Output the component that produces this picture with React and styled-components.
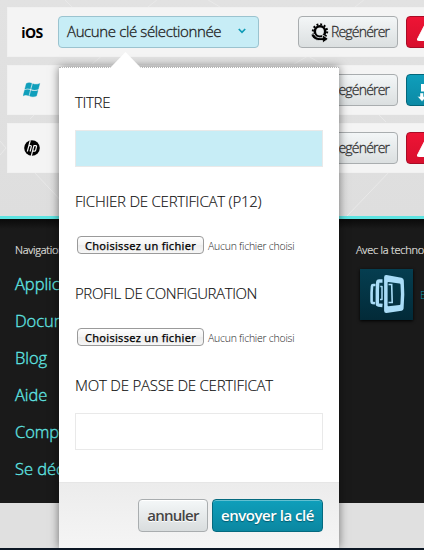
import React from 'react';
import styled, { createGlobalStyle } from 'styled-components';

const GlobalStyle = createGlobalStyle`
  * { box-sizing: border-box; }
  html, body { margin: 0; padding: 0; overflow: hidden; }
  body { font-family: "Open Sans", "Noto Sans", sans-serif; font-weight: 300; color: #111; }
  button { font-family: inherit; margin: 0; cursor: pointer; }
`;

const Page = styled.div`
  position: relative;
  display: flex;
  flex-direction: column;
  width: 424px;
  height: 550px;
  overflow: hidden;
  background: #e0e0e0;
`;

const KeysSection = styled.section`
  position: relative;
  flex: none;
  height: 216px;
  padding: 7px 0 0 7px;
  display: flex;
  flex-direction: column;
  gap: 8px;
  overflow: hidden;
  background: linear-gradient(#e2e2e2, #dedede);
`;

const Texture = styled.svg`
  position: absolute;
  inset: 0;
`;

const KeyRow = styled.div`
  position: relative;
  flex: none;
  display: flex;
  align-items: center;
  width: 450px;
  height: 50px;
  background: #f4f4f4;
  border: 1px solid #f1f1f1;
`;

const Platform = styled.div`
  flex: none;
  width: 48px;
  height: 48px;
  margin-right: 2px;
  display: flex;
  align-items: center;
  justify-content: center;
  font-size: 14px;
  font-weight: 700;
  letter-spacing: -0.5px;
  color: #000;
`;

const KeySelect = styled.button`
  display: flex;
  align-items: center;
  justify-content: space-between;
  width: 201px;
  height: 32px;
  padding: 0 12px 2px 8px;
  border: 1px solid #9bc3cf;
  border-radius: 4px;
  background: #c7edf6;
  color: #222;
  font-size: 15px;
  font-weight: 300;
  letter-spacing: -0.38px;
  white-space: nowrap;
  -webkit-text-stroke: 0.3px #222;
`;

const RowActions = styled.div`
  display: flex;
  gap: 8px;
  margin-left: auto;
  width: 158px;
`;

const RegenerateButton = styled.button`
  flex: none;
  display: flex;
  align-items: center;
  gap: 2px;
  width: 100px;
  height: 32px;
  padding: 0 0 1px 12px;
  border: 1px solid #a9adaf;
  border-radius: 4px;
  background: linear-gradient(#f3f6f7, #dbdfe0);
  color: #333;
  font-size: 14px;
  font-weight: 300;
  letter-spacing: -0.82px;
  -webkit-text-stroke: 0.3px #333;
  svg { margin-top: 2px; }
`;

const StatusButton = styled.button`
  flex: none;
  width: 40px;
  height: 32px;
  padding: 0;
  border: 1px solid ${(p) => (p.$danger ? '#a80c26' : '#04667a')};
  border-radius: 4px;
  background: ${(p) => (p.$danger
    ? 'linear-gradient(#ee1435, #d80f2d)'
    : 'linear-gradient(#0f9ebb, #0b8aa5)')};
  svg { display: block; }
`;

const SiteFooter = styled.footer`
  flex: none;
  display: flex;
  height: 287px;
  border-top: 3px solid #5ee4e2;
  background: linear-gradient(#0a0a0a, #1a1a1a 10px);
`;

const FooterColumn = styled.div`
  flex: none;
  width: 341px;
  padding: 23px 0 0 15px;
`;

const FooterTitle = styled.div`
  font-size: 11px;
  line-height: 16px;
  letter-spacing: -0.25px;
  color: #e4e4e0;
  white-space: nowrap;
  -webkit-text-stroke: 0.2px #e4e4e0;
`;

const NavList = styled.nav`
  display: flex;
  flex-direction: column;
  padding-top: 7px;
`;

const NavLink = styled.a`
  height: 37px;
  font-size: 16.5px;
  line-height: 37px;
  letter-spacing: -0.05px;
  color: #5fe3e1;
  -webkit-text-stroke: 0.35px #5fe3e1;
`;

const TechRow = styled.div`
  display: flex;
  align-items: center;
  gap: 7px;
  margin: 11px 0 0 4px;
`;

const TechLogo = styled.div`
  flex: none;
  width: 53px;
  height: 51px;
  background: linear-gradient(#053e50, #022a38);
  box-shadow: 0 1px 3px #000;
  svg { display: block; }
`;

const TechLink = styled.a`
  font-size: 11px;
  color: #1295ae;
`;

const BottomStrip = styled.div`
  flex: none;
  height: 2px;
  margin-top: auto;
  background: #0c1724;
`;

const Popover = styled.div`
  position: absolute;
  left: 59px;
  top: 67px;
  width: 280px;
  height: 481px;
  display: flex;
  flex-direction: column;
  background: #fff;
  box-shadow: 0 0 9px rgba(0, 0, 0, 0.5);
  clip-path: inset(-20px -20px 0 -20px);
`;

const PopoverArrow = styled.svg`
  position: absolute;
  left: 51px;
  top: -16px;
`;

const PopoverBody = styled.div`
  flex: 1;
  display: flex;
  flex-direction: column;
  padding: 24px 16px 0;
  border-top: 1px dotted #b5b5b5;
`;

const Field = styled.div`
  flex: none;
  height: ${(p) => p.$height}px;
`;

const Label = styled.label`
  display: block;
  height: 20px;
  font-size: 15px;
  line-height: 20px;
  letter-spacing: ${(p) => p.$tracking}px;
  color: #111;
  white-space: nowrap;
  -webkit-text-stroke: 0.15px #111;
`;

const TextInput = styled.input`
  display: block;
  width: 248px;
  height: 37px;
  margin-top: 18px;
  border: 1px solid #e9e9e9;
  outline: none;
  background: ${(p) => (p.$active ? '#c7edf6' : '#fff')};
`;

const FilePicker = styled.div`
  display: flex;
  align-items: center;
  gap: 4px;
  margin: 25px 0 0 2px;
  height: 18px;
`;

const FileButton = styled.button`
  width: 127px;
  height: 18px;
  padding: 0;
  border: 1px solid #9a9a9a;
  border-radius: 4px;
  background: linear-gradient(#fff, #f3f3f3 50%, #ececec 51%, #f6f6f6);
  color: #000;
  font-family: "Noto Sans", sans-serif;
  font-size: 11px;
  font-weight: 400;
  line-height: 15px;
  letter-spacing: 0.3px;
  white-space: nowrap;
  -webkit-text-stroke: 0.25px #000;
`;

const FileStatus = styled.span`
  font-size: 10.5px;
  line-height: 16px;
  letter-spacing: -0.25px;
  padding-top: 1px;
  color: #222;
  white-space: nowrap;
`;

const PopoverFooter = styled.div`
  flex: none;
  display: flex;
  justify-content: flex-end;
  gap: 4px;
  height: 66px;
  padding: 16px 16px 0 0;
  border-top: 1px solid #e6e6e6;
  background: linear-gradient(#ececec, #f5f5f5);
`;

const ActionButton = styled.button`
  width: ${(p) => (p.$primary ? 111 : 70)}px;
  height: 33px;
  padding: 0 0 1px;
  border: 1px solid ${(p) => (p.$primary ? '#056a7f' : '#a9adaf')};
  border-radius: 4px;
  background: ${(p) => (p.$primary
    ? 'linear-gradient(#0f9fbb, #0b87a1)'
    : 'linear-gradient(#f4f7f8, #d9ddde)')};
  box-shadow: inset 0 1px 0 ${(p) => (p.$primary ? '#62c0d1' : '#fff')};
  color: ${(p) => (p.$primary ? '#fff' : '#444')};
  font-size: 15px;
  font-weight: 600;
  letter-spacing: ${(p) => (p.$primary ? -0.46 : -0.75)}px;
  text-shadow: ${(p) => (p.$primary ? '0 1px 1px #045b6d' : '0 1px 0 #fff')};
  white-space: nowrap;
`;

const Chevron = () => (
  <svg width="8" height="6" viewBox="0 0 8 6">
    <path d="M.8 1 4 4.3 7.2 1" fill="none" stroke="#0e9bb6" strokeWidth="1.7" />
  </svg>
);

const GearIcon = () => (
  <svg width="18" height="20" viewBox="0 0 18 20">
    <circle cx="9" cy="8.5" r="7.2" fill="none" stroke="#000" strokeWidth="2" strokeDasharray="1.9 1.87" />
    <circle cx="9" cy="8.5" r="5.2" fill="none" stroke="#000" strokeWidth="2.6" />
    <path d="M0 11h3.200c.8 2.400 3 3.700 5.600 3.700h2.800v-2.900l5.800 4.100-5.800 4.100v-2.400H9c-5 0-8.300-2.600-9-6.600z" fill="#000" stroke="#eef1f2" strokeWidth=".8" />
  </svg>
);

const WarningIcon = () => (
  <svg width="38" height="30" viewBox="0 0 38 30">
    <path d="M19 5.500 28 22q.5 1.500-1 1.500H11.500q-1.500 0-1-1.500z" fill="#fff" stroke="#fff" strokeLinejoin="round" />
    <path d="M18 11h2.200l-.4 6h-1.400zM18 18.500h2.200v2H18z" fill="#e01230" />
  </svg>
);

const DownloadIcon = () => (
  <svg width="38" height="30" viewBox="0 0 38 30">
    <path d="M14 9h13v13H19v-3h3l-4-2.500h-4z" fill="#fff" />
    <path d="M13 18h3.500v3.500h3L15 26.500 10.500 21.500H13z" fill="#fff" stroke="#0c8faa" strokeWidth=".4" />
  </svg>
);

const WindowsIcon = () => (
  <svg width="18" height="16" viewBox="0 0 18 16">
    <g fill="#109fbb" stroke="#109fbb" strokeWidth=".35">
      <path d="M3.300 1.600C5.200.4 6.900.5 8.800 1.300L7.300 7C5.500 6.200 3.800 6.200 1.800 7.200z" />
      <path d="M9.800 1.700c2 .9 4.300.9 7-.2l-1.500 5.700c-2.500 1-4.700 1-7 .1z" />
      <path d="M1.600 8.200c2-1 3.700-1 5.500-.2l-1.500 5.700c-1.900-.8-3.600-.8-5.500.1z" />
      <path d="M8 8.400c2.300.9 4.500.9 7 0L13.500 14c-2.500 1-4.700 1-7 0z" />
    </g>
  </svg>
);

const HpIcon = () => (
  <svg width="16" height="16" viewBox="0 0 16 16">
    <circle cx="8" cy="8" r="7.800" fill="#000" />
    <g fill="none" stroke="#f4f4f4" strokeWidth="1.200">
      <path d="M6.300.3 3.300 11.500M4.800 5.700h1.700q1 0 .8 1l-1.200 4.800" />
      <path d="M10 5.300 7.300 15.800M9.800 5.700h2q1 0 .7 1l-.9 3.600q-.2.800-1.200.8H8.700" />
    </g>
  </svg>
);

const PhonesIcon = () => (
  <svg width="53" height="51" viewBox="0 0 53 51">
    <g fill="none" stroke="#a9dcf7" strokeLinejoin="round">
      <path d="M15.500 16h-2.500q-.9 0-1 1.200l-.4 6.300v9q0 1.300.9 1.400l2.500.3" strokeWidth="2.600" />
      <path d="M22.500 12h-3.300q-1.400 0-1.500 1.500l-.4 7.500v13.500q0 1.300 1.200 1.500l4 .5" strokeWidth="3.400" />
      <path d="M20.300 17.500h1.700v13h-2" strokeWidth="1.500" />
    </g>
    <path
      d="M26.500 6 41.500 8.800q2.200.5 2.300 2.700l.5 14-.7 14q-.2 2-2 2.300L26.500 44q-2.300.2-2.400-2.200V8.200Q24.200 5.700 26.500 6zM27.600 13.500v23q0 .9.900.8l11-1.300q.9-.1.900-1l.5-10-.4-9.300q-.1-1-1-1.100l-11-1.600q-.9-.1-.9.500z"
      fill="#a9dcf7"
      fillRule="evenodd"
    />
    <path d="M28.500 15.500h3.200l.5 18h-3.700" fill="none" stroke="#a9dcf7" strokeWidth="1.600" />
  </svg>
);

const KeyActions = ({ danger }) => (
  <RowActions>
    <RegenerateButton><GearIcon />Regénérer</RegenerateButton>
    <StatusButton $danger={danger}>{danger ? <WarningIcon /> : <DownloadIcon />}</StatusButton>
  </RowActions>
);

const FileField = ({ label, tracking }) => (
  <Field $height={92}>
    <Label $tracking={tracking}>{label}</Label>
    <FilePicker>
      <FileButton>Choisissez un fichier</FileButton>
      <FileStatus>Aucun fichier choisi</FileStatus>
    </FilePicker>
  </Field>
);

const links = ['Application', 'Documentation', 'Blog', 'Aide', 'Compte', 'Se déconnecter'];

export default function App() {
  return (
    <>
      <GlobalStyle />
      <Page>
        <KeysSection>
          <Texture width="424" height="216">
            <path
              d="M60-5 75 10M148 7l15-12M92 64l12-10M0 155l6-7-6-7M30 119l12-12M34 172 66 206M200-5l20 12M355 7l15-12M294 64l14-8 14 8M347 216l44-46M372 108l14 14"
              fill="none"
              stroke="#e9e9e9"
            />
          </Texture>
          <KeyRow>
            <Platform>iOS</Platform>
            <KeySelect>Aucune clé sélectionnée<Chevron /></KeySelect>
            <KeyActions danger />
          </KeyRow>
          <KeyRow>
            <Platform><WindowsIcon /></Platform>
            <KeyActions />
          </KeyRow>
          <KeyRow>
            <Platform><HpIcon /></Platform>
            <KeyActions danger />
          </KeyRow>
        </KeysSection>

        <SiteFooter>
          <FooterColumn>
            <FooterTitle>Navigation</FooterTitle>
            <NavList>
              {links.map((l) => <NavLink key={l}>{l}</NavLink>)}
            </NavList>
          </FooterColumn>
          <FooterColumn>
            <FooterTitle>Avec la techno</FooterTitle>
            <TechRow>
              <TechLogo><PhonesIcon /></TechLogo>
              <TechLink>E</TechLink>
            </TechRow>
          </FooterColumn>
        </SiteFooter>
        <BottomStrip />

        <Popover>
          <PopoverArrow width="31" height="17" viewBox="0 0 31 17">
            <path d="M0 17 15.500 1 31 17z" fill="#fff" />
          </PopoverArrow>
          <PopoverBody>
            <Field $height={99}>
              <Label $tracking={-0.3}>TITRE</Label>
              <TextInput $active />
            </Field>
            <FileField label="FICHIER DE CERTIFICAT (P12)" tracking={-0.23} />
            <FileField label="PROFIL DE CONFIGURATION" tracking={-0.4} />
            <Field $height={80}>
              <Label $tracking={-0.22}>MOT DE PASSE DE CERTIFICAT</Label>
              <TextInput type="password" />
            </Field>
          </PopoverBody>
          <PopoverFooter>
            <ActionButton>annuler</ActionButton>
            <ActionButton $primary>envoyer la clé</ActionButton>
          </PopoverFooter>
        </Popover>
      </Page>
    </>
  );
}
